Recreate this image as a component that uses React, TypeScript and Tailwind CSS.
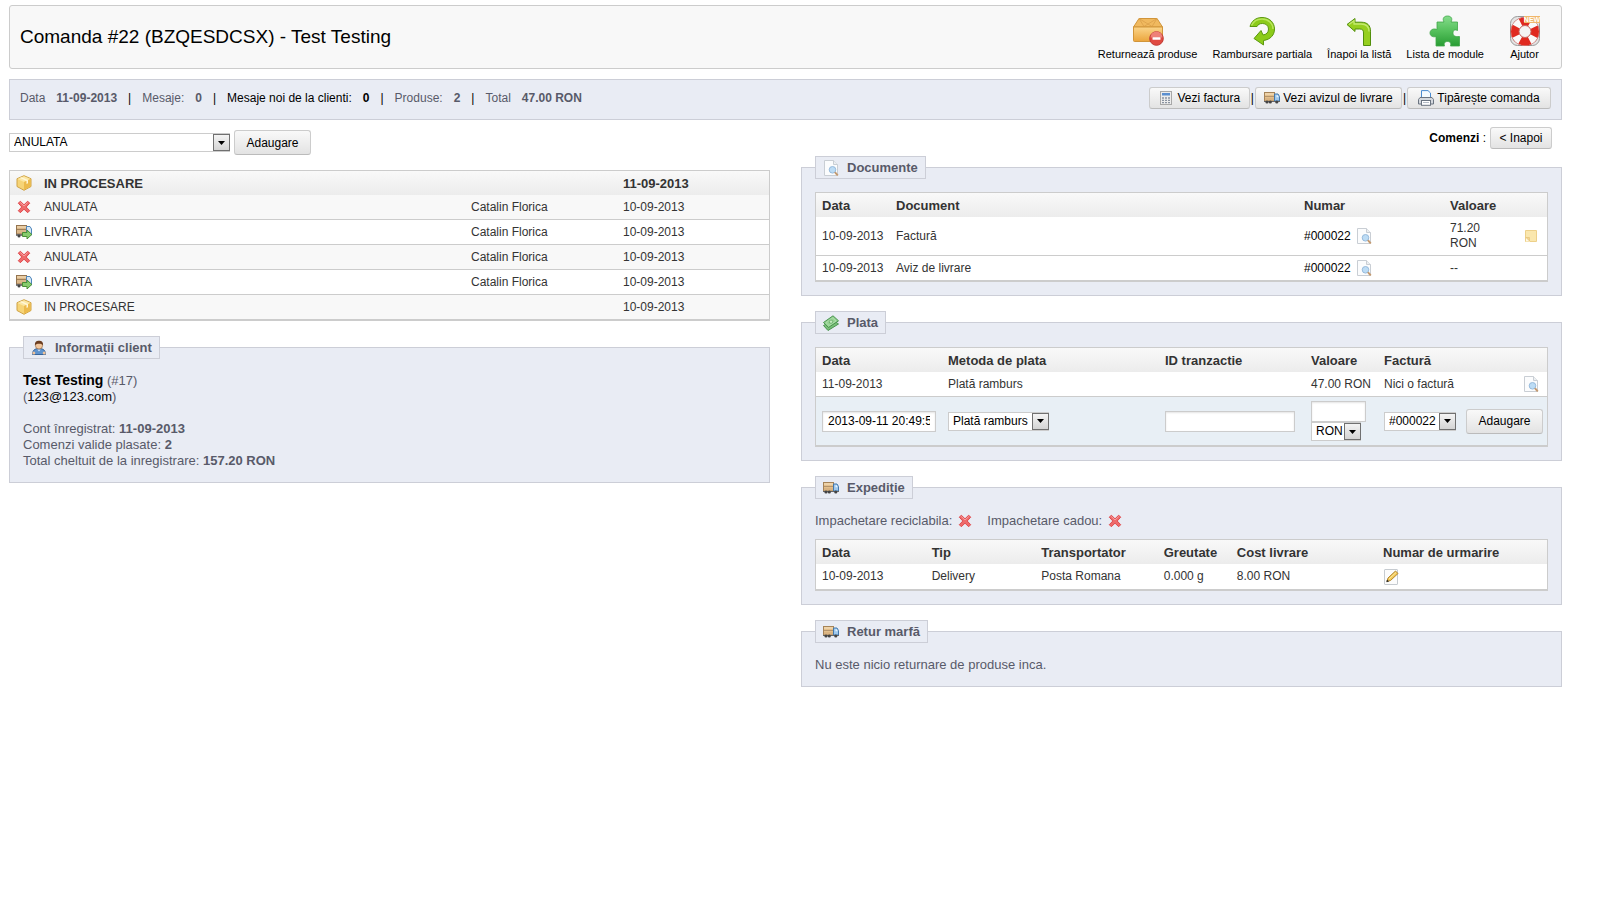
import { ReactNode } from 'react';

type IconProps = { className?: string };

const BoxReturnIcon = () => (
  <svg width="32" height="32" viewBox="0 0 32 32">
    <defs>
      <linearGradient id="carton" x1="0" y1="0" x2="0" y2="1">
        <stop offset="0" stopColor="#fbd58a" />
        <stop offset="1" stopColor="#eba53c" />
      </linearGradient>
    </defs>
    <path d="M7 3.500h18l5.500 8.500h-29z" fill="#f0b95f" stroke="#d1953a" />
    <path d="M7 3.500l5 8L25 3.500M25 3.500l-5 8L7 3.500" stroke="#dba04a" fill="none" strokeWidth="0.800" />
    <path d="M1.500 12h29v13.500q0 1-1 1h-27q-1 0-1-1z" fill="url(#carton)" stroke="#d1953a" />
    <circle cx="24.500" cy="23.500" r="6.800" fill="#e04a42" stroke="#c03a33" />
    <path d="M18.500 22.500a6 6 0 0 1 12 0z" fill="#ee8178" />
    <rect x="20.500" y="22.300" width="8" height="2.500" rx="0.500" fill="#fff" />
  </svg>
);

const RefundIcon = () => (
  <svg width="32" height="32" viewBox="0 0 32 32">
    <path
      d="M4 11.500C5.500 6 10 2.500 16 2.500c7.500 0 12.500 5 12.500 11.500 0 6-4 10.500-11 11.500v4.500L8 23.500l7-8 2 4.500c3.500-.500 5.500-2.500 5.500-6 0-3.300-2.500-5.500-6-5.500-3 0-4.500 1-5.500 3z"
      fill="#8ccb1a"
      stroke="#5b980f"
      strokeLinejoin="round"
    />
    <path d="M5.500 10.500C7.500 6 11.500 4 16 4c6.500 0 11 4.500 11 10" fill="none" stroke="#b9e65c" strokeWidth="1.500" />
  </svg>
);

const BackIcon = () => (
  <svg width="32" height="32" viewBox="0 0 32 32">
    <path
      d="M4 9.500l8-6v3.700h6c6.500 0 9.500 3.300 9.500 9V30.500h-7V18c0-3-1-4-4-4H12v2.500z"
      fill="#96cf1f"
      stroke="#528f0c"
      strokeLinejoin="round"
    />
    <path d="M6 9.500l5-3.800V9h7c5.500 0 8 2.500 8 7.500" fill="none" stroke="#c4ea70" strokeWidth="1.300" />
  </svg>
);

const ModulesIcon = () => (
  <svg width="32" height="32" viewBox="0 0 32 32">
    <defs>
      <linearGradient id="puzzle" x1="0" y1="0" x2="0" y2="1">
        <stop offset="0" stopColor="#86dc8c" />
        <stop offset="0.5" stopColor="#55c05c" />
        <stop offset="1" stopColor="#289c33" />
      </linearGradient>
    </defs>
    <path
      d="M8 7h7c-2-3.500 0-6 3.500-6s5.500 2.500 3.500 6h6.500v8.500c-3-1.500-4.500 0-4.500 2.500s1.500 4 6.500 3.500V31h-9c1-3-.500-4.500-3-4.500s-4 1.500-3 4.500H7v-9.500c-3 1-6-.500-6-3.500s3-5 7-3.500z"
      fill="url(#puzzle)"
      stroke="#3fa648"
      strokeWidth="0.800"
      strokeLinejoin="round"
    />
  </svg>
);

const HelpIcon = () => (
  <svg width="32" height="32" viewBox="0 0 32 32">
    <rect x="1.500" y="1.500" width="29" height="29" rx="7" fill="#e4e4e4" stroke="#9a9a9a" />
    <circle cx="16" cy="16.500" r="10" fill="none" stroke="#b9453e" strokeWidth="9" />
    <circle cx="16" cy="16.500" r="10" fill="none" stroke="#fafafa" strokeWidth="8" />
    <circle
      cx="16"
      cy="16.500"
      r="10"
      fill="none"
      stroke="#e02a20"
      strokeWidth="8"
      strokeDasharray="9.700 6"
      strokeDashoffset="4.850"
    />
    <circle cx="16" cy="16.500" r="6" fill="#f4f4f4" stroke="#c9665f" />
    <rect x="15" y="1" width="16" height="7" fill="#f0b76c" />
    <text x="23" y="7" textAnchor="middle" fontSize="7" fontWeight="bold" fill="#fff">NEW</text>
  </svg>
);

const BoxIcon = () => (
  <svg className="block" width="16" height="16" viewBox="0 0 16 16">
    <path d="M8 .700l7 3v7.800l-7 3.800-7-3.800V3.700z" fill="#f6d477" stroke="#cfa244" strokeLinejoin="round" />
    <path d="M1.500 4L8 7l6.500-3L8 1.200z" fill="#fbe7a5" />
    <path d="M8 7v8l6.500-3.700V4z" fill="#ecba4c" />
    <path d="M4 2.900l6.500 3v3l1.500-.700V5L5.500 2.200z" fill="#fff6d8" />
  </svg>
);

const CrossIcon = ({ className }: IconProps) => (
  <svg className={className} width="16" height="16" viewBox="0 0 16 16">
    <path
      d="M4.300 2.200L8 5.800l3.700-3.600 2 2L10.200 8l3.500 3.700-2 2L8 10.200l-3.700 3.500-2-2L5.800 8 2.300 4.200z"
      fill="#ee6a6a"
      stroke="#e04a4e"
      strokeLinejoin="round"
    />
    <path d="M4.300 3.500L8 7l3.700-3.500" fill="none" stroke="#f7a3a3" />
  </svg>
);

const TruckIcon = ({ className }: IconProps) => (
  <svg className={className} width="16" height="16" viewBox="0 0 16 16">
    <rect x="0.500" y="2.500" width="10" height="8.500" fill="#e3bf8c" stroke="#a58358" />
    <path d="M1 4h9" stroke="#f8e6c6" />
    <path d="M1 6.500h9" stroke="#b4946c" />
    <path d="M1 9h9" stroke="#d0a878" />
    <path d="M10.500 4h3.500l1.500 2.500V11h-5z" fill="#9fc8ec" stroke="#4378ad" />
    <path d="M12.500 5.300h1.200l.8 2h-2z" fill="#e6f3fd" />
    <path d="M0 11.500h16" stroke="#666" />
    <circle cx="3" cy="12" r="1.600" fill="#444" />
    <circle cx="6.300" cy="12" r="1.600" fill="#444" />
    <circle cx="12.800" cy="12" r="1.600" fill="#444" />
  </svg>
);

const DeliveredIcon = () => (
  <svg className="block" width="16" height="16" viewBox="0 0 16 16">
    <rect x="0.500" y="1.500" width="10" height="8.500" fill="#dbb88a" stroke="#947450" />
    <path d="M1 3h9" stroke="#f8e2be" />
    <path d="M1 5.500h9" stroke="#a0805a" />
    <path d="M10.500 2.500h3.500l1.500 2.500v6h-5z" fill="#d5e7f7" stroke="#4f86bb" />
    <path d="M0 11h9" stroke="#555" strokeWidth="1.500" />
    <circle cx="3" cy="12" r="1.500" fill="#444" />
    <path d="M6.500 8.500H11V6l4.800 4.500L11 15v-2.500H6.500z" fill="#86cc6c" stroke="#4a8f36" strokeLinejoin="round" />
  </svg>
);

const UserIcon = () => (
  <svg width="16" height="16" viewBox="0 0 16 16">
    <path d="M1.500 14.500c0-4 2-6 6.500-6s6.500 2 6.500 6z" fill="#5f93cc" stroke="#37649a" />
    <circle cx="2.800" cy="13" r="1.500" fill="#f0c39a" />
    <circle cx="13.200" cy="13" r="1.500" fill="#f0c39a" />
    <path d="M6.500 9.500l1.500 2 1.500-2z" fill="#dfeaf6" />
    <circle cx="8" cy="5.500" r="3.600" fill="#f2c79e" stroke="#8a5a34" strokeWidth="0.600" />
    <path d="M4 5.500C3.500 2 5.500.800 8 .800s4.500 1.200 4 4.700C11 4 9.500 3.800 8 3.800S5 4 4 5.500z" fill="#6b3d20" />
  </svg>
);

const PreviewIcon = ({ className }: IconProps) => (
  <svg className={className} width="16" height="16" viewBox="0 0 16 16">
    <path d="M1.500.500h9l4 4v11h-13z" fill="#fbfcfd" stroke="#c9ced4" />
    <path d="M10.500.500v4h4" fill="#eceff2" stroke="#c9ced4" />
    <circle cx="9.500" cy="9.800" r="3.300" fill="#bcdcf5" stroke="#96badc" />
    <path d="M12.500 12.800l1.800 2" stroke="#c49a70" strokeWidth="2" strokeLinecap="round" />
  </svg>
);

const MoneyIcon = () => (
  <svg width="16" height="16" viewBox="0 0 16 16">
    <path d="M.500 10.500L10 5l5.500 4L5 15.500z" fill="#79bf78" stroke="#4a9450" strokeLinejoin="round" />
    <path d="M.500 7.500L10 .800l5.500 5L5.500 12.500z" fill="#93d190" stroke="#4a9450" strokeLinejoin="round" />
    <path d="M3 7.700L9.700 3l3.300 3-6.800 4.500z" fill="none" stroke="#b5e0b1" strokeWidth="0.800" />
    <circle cx="8" cy="6.700" r="1.700" fill="#c5eac1" stroke="#5aa55c" strokeWidth="0.700" />
  </svg>
);

const NoteIcon = () => (
  <svg className="block" width="16" height="16" viewBox="0 0 16 16">
    <path d="M2.500 2.500h11v11h-11z" fill="#fae7ae" stroke="#edd08a" />
    <path d="M3 9.500h4v4H3z" fill="#fff8e2" />
    <path d="M3 9.500h3.500V13z" fill="#f3d68e" stroke="#e0b868" strokeWidth="0.600" />
  </svg>
);

const EditIcon = () => (
  <svg className="block" width="16" height="16" viewBox="0 0 16 16">
    <rect x="1.500" y="0.500" width="13" height="15" rx="0.500" fill="#fcfcfc" stroke="#c6cbd0" />
    <path d="M4 12.500l1-3.500 7.500-7 2.500 2.500-7.500 7z" fill="#f3c955" stroke="#b18632" strokeLinejoin="round" />
    <path d="M6 10l7-6.500" stroke="#fdeaa6" />
    <path d="M3.700 12.800l.500-1.800 1.300 1.300z" fill="#222" stroke="#222" strokeWidth="0.600" />
  </svg>
);

const CalculatorIcon = () => (
  <svg width="16" height="16" viewBox="0 0 16 16">
    <rect x="2.500" y="1.500" width="11" height="13" fill="#ececec" stroke="#a8a8a8" />
    <rect x="4" y="3" width="8" height="2.500" fill="#5b8fd0" />
    <path d="M4 8h8M4 10.300h8M4 12.600h8" stroke="#8a93a0" strokeWidth="1.300" strokeDasharray="2 1" />
  </svg>
);

const PrinterIcon = () => (
  <svg width="16" height="16" viewBox="0 0 16 16">
    <path d="M3.500 8V.600H10L12.500 3v5z" fill="#f4faff" stroke="#4b8bd0" />
    <path d="M2 7.500h12l1.500 2v4.500H.500V9.500z" fill="#d4d8de" stroke="#6b7480" strokeLinejoin="round" />
    <rect x="3.500" y="10.500" width="9" height="4.800" fill="#fff" stroke="#6b7480" />
    <path d="M5 12.500h6" stroke="#b5bcc6" />
  </svg>
);

const Button = ({ children, className = '' }: { children: ReactNode; className?: string }) => (
  <button
    type="button"
    className={`inline-flex items-center justify-center whitespace-nowrap rounded-[3px] border border-[#ccc] border-b-[#bbb] bg-linear-to-b from-[#f9f9f9] to-[#e3e3e3] text-black ${className}`}
  >
    {children}
  </button>
);

const Select = ({ label, value, className }: { label: string; value: string; className: string }) => (
  <span className={`relative inline-block h-[19px] align-middle text-black ${className}`}>
    <select
      aria-label={label}
      defaultValue={value}
      className="block h-full w-full appearance-none border border-[#ccc] bg-white pl-1 leading-[17px]"
    >
      <option>{value}</option>
    </select>
    <span className="pointer-events-none absolute right-0 top-px flex h-[17px] w-[17px] items-center justify-center border border-[#707070] bg-linear-to-b from-[#f4f4f4] to-[#d4d4d4]">
      <svg width="7" height="4" viewBox="0 0 7 4">
        <path d="M0 0h7L3.500 4z" fill="#000" />
      </svg>
    </span>
  </span>
);

const Input = ({ label, value, className }: { label: string; value?: string; className: string }) => (
  <input
    type="text"
    aria-label={label}
    defaultValue={value}
    className={`block h-[21px] border border-[#ccc] bg-white px-[5px] text-black shadow-[inset_0_1px_2px_#e4e4e4] ${className}`}
  />
);

const Panel = ({ title, icon, children }: { title: string; icon: ReactNode; children: ReactNode }) => (
  <fieldset className="min-w-0 border border-[#ccced7] bg-[#e9ecf4] px-[13px] pb-[13px] pt-[13px] text-[13px]">
    <legend className="flex h-[23px] items-center gap-2 border border-[#ccced7] bg-[#e9ecf4] px-[7px] font-bold">
      {icon}
      {title}
    </legend>
    {children}
  </fieldset>
);

type TableProps = { widths: string[]; head: ReactNode[]; children: ReactNode; className?: string };

const Table = ({ widths, head, children, className = '' }: TableProps) => (
  <table
    className={`w-full table-fixed border-separate border-spacing-0 border border-b-2 border-[#ccc] bg-white text-left text-[12px] leading-[15px] text-[#333] [&_td]:px-[6px] [&_th]:px-[6px] [&_tr:not(:last-child)>td]:border-b [&_tr>td]:border-[#ccc] ${className}`}
  >
    <colgroup>
      {widths.map((width, i) => (
        <col key={i} className={width} />
      ))}
    </colgroup>
    <thead>
      <tr className="h-6 bg-linear-to-b from-[#f9f9f9] to-[#ececec] text-[13px]">
        {head.map((cell, i) => (
          <th key={i} className="whitespace-nowrap">{cell}</th>
        ))}
      </tr>
    </thead>
    <tbody>{children}</tbody>
  </table>
);

const toolbar = [
  { label: 'Returnează produse', icon: <BoxReturnIcon /> },
  { label: 'Rambursare partiala', icon: <RefundIcon /> },
  { label: 'Înapoi la listă', icon: <BackIcon /> },
  { label: 'Lista de module', icon: <ModulesIcon /> },
  { label: 'Ajutor', icon: <HelpIcon /> },
];

const history = [
  { status: 'ANULATA', icon: <CrossIcon className="block" />, employee: 'Catalin Florica' },
  { status: 'LIVRATA', icon: <DeliveredIcon />, employee: 'Catalin Florica' },
  { status: 'ANULATA', icon: <CrossIcon className="block" />, employee: 'Catalin Florica' },
  { status: 'LIVRATA', icon: <DeliveredIcon />, employee: 'Catalin Florica' },
  { status: 'IN PROCESARE', icon: <BoxIcon />, employee: '' },
];

const documents = [
  { name: 'Factură', value: '71.20 RON', note: true, height: 'h-[39px]' },
  { name: 'Aviz de livrare', value: '--', note: false, height: 'h-6' },
];

const Header = () => (
  <header className="flex h-16 items-center justify-between rounded-[3px] border border-[#ccc] bg-[#f8f8f8] pl-[10px] pr-[11px]">
    <h1 className="text-[19px] text-black">Comanda #22 (BZQESDCSX) - Test Testing</h1>
    <nav className="flex gap-[15px] pt-[2px]">
      {toolbar.map(({ label, icon }) => (
        <a
          key={label}
          href="#"
          className="flex min-w-[51px] flex-col items-center whitespace-nowrap text-[11px] leading-[15px] text-black"
        >
          {icon}
          {label}
        </a>
      ))}
    </nav>
  </header>
);

const Separator = () => <span className="text-black">|</span>;

const InfoBar = () => (
  <div className="mt-[10px] flex h-[41px] items-center justify-between border border-[#ccced7] bg-[#e9ecf4] px-[10px] pb-[3px]">
    <div className="flex gap-[11px]">
      <span>Data</span>
      <b>11-09-2013</b>
      <Separator />
      <span>Mesaje:</span>
      <b>0</b>
      <Separator />
      <a href="#" className="flex gap-[11px] text-black">
        <span>Mesaje noi de la clienti:</span>
        <b>0</b>
      </a>
      <Separator />
      <span>Produse:</span>
      <b>2</b>
      <Separator />
      <span>Total</span>
      <b>47.00 RON</b>
    </div>
    <div className="flex items-center gap-px">
      <Button className="h-[22px] w-[101px] gap-[3px]">
        <CalculatorIcon />
        Vezi factura
      </Button>
      <Separator />
      <Button className="h-[22px] w-[147px] gap-[3px]">
        <TruckIcon />
        Vezi avizul de livrare
      </Button>
      <Separator />
      <Button className="h-[22px] w-[144px] gap-[3px]">
        <PrinterIcon />
        Tipărește comanda
      </Button>
    </div>
  </div>
);

const StatusHistory = () => (
  <Table
    widths={['w-[28px]', 'w-auto', 'w-[152px]', 'w-[152px]']}
    head={[<BoxIcon key="icon" />, 'IN PROCESARE', '', '11-09-2013']}
    className="mt-[15px]"
  >
    {history.map(({ status, icon, employee }, i) => (
      <tr key={i} className="h-[25px] last:h-6 odd:bg-[#f8f8f8]">
        <td>{icon}</td>
        <td>{status}</td>
        <td>{employee}</td>
        <td>10-09-2013</td>
      </tr>
    ))}
  </Table>
);

const ClientPanel = () => (
  <Panel title="Informații client" icon={<UserIcon />}>
    <p>
      <a href="#" className="text-[14px] font-bold text-black">Test Testing</a> (#17)
    </p>
    <p>
      (<a href="#" className="text-black">123@123.com</a>)
    </p>
    <p className="mt-4">Cont înregistrat: <b>11-09-2013</b></p>
    <p>Comenzi valide plasate: <b>2</b></p>
    <p>Total cheltuit de la inregistrare: <b>157.20 RON</b></p>
  </Panel>
);

const DocumentsPanel = () => (
  <Panel title="Documente" icon={<PreviewIcon />}>
    <Table
      widths={['w-[74px]', 'w-auto', 'w-[146px]', 'w-[64px]', 'w-[39px]']}
      head={['Data', 'Document', 'Numar', 'Valoare', '']}
    >
      {documents.map(({ name, value, note, height }) => (
        <tr key={name} className={height}>
          <td className="whitespace-nowrap">10-09-2013</td>
          <td>{name}</td>
          <td>
            <a href="#" className="flex items-center gap-[5px] text-black">
              #000022
              <PreviewIcon />
            </a>
          </td>
          <td>{value}</td>
          <td className="pl-[15px]!">{note && <NoteIcon />}</td>
        </tr>
      ))}
    </Table>
  </Panel>
);

const PaymentPanel = () => (
  <Panel title="Plata" icon={<MoneyIcon />}>
    <Table
      widths={['w-[126px]', 'w-auto', 'w-[146px]', 'w-[73px]', 'w-[82px]', 'w-[87px]']}
      head={['Data', 'Metoda de plata', 'ID tranzactie', 'Valoare', 'Factură', '']}
    >
      <tr className="h-[25px]">
        <td>11-09-2013</td>
        <td>Plată ramburs</td>
        <td />
        <td className="whitespace-nowrap">47.00 RON</td>
        <td className="whitespace-nowrap">Nici o factură</td>
        <td>
          <PreviewIcon className="ml-auto mr-0.5 block" />
        </td>
      </tr>
      <tr className="h-12 bg-[#e8eff5]">
        <td>
          <Input label="Data" value="2013-09-11 20:49:53" className="w-full" />
        </td>
        <td>
          <Select label="Metoda de plata" value="Plată ramburs" className="w-[101px]" />
        </td>
        <td>
          <Input label="ID tranzactie" className="w-[130px]" />
        </td>
        <td>
          <Input label="Valoare" className="w-[55px]" />
          <Select label="Moneda" value="RON" className="w-[50px]" />
        </td>
        <td>
          <Select label="Factură" value="#000022" className="w-[72px]" />
        </td>
        <td>
          <Button className="h-[25px] w-[77px]">Adaugare</Button>
        </td>
      </tr>
    </Table>
  </Panel>
);

const ShippingPanel = () => (
  <Panel title="Expediție" icon={<TruckIcon />}>
    <div className="mb-[10px] flex items-center gap-[14px] leading-[17px]">
      <span className="flex items-center gap-[5px]">
        Impachetare reciclabila:
        <CrossIcon />
      </span>
      <span className="flex items-center gap-[5px]">
        Impachetare cadou:
        <CrossIcon />
      </span>
    </div>
    <Table
      widths={['w-[15%]', 'w-[15%]', 'w-auto', 'w-[10%]', 'w-[20%]', 'w-[170px]']}
      head={['Data', 'Tip', 'Transportator', 'Greutate', 'Cost livrare', 'Numar de urmarire']}
    >
      <tr className="h-[25px]">
        <td>10-09-2013</td>
        <td>Delivery</td>
        <td>Posta Romana</td>
        <td>0.000 g</td>
        <td>8.00 RON</td>
        <td>
          <a href="#" aria-label="Editează">
            <EditIcon />
          </a>
        </td>
      </tr>
    </Table>
  </Panel>
);

export default function App() {
  return (
    <main className="bg-white pb-8 pl-[9px] pr-[38px] pt-[5px] font-['Liberation_Sans',Arial,sans-serif] text-[12px] leading-4 text-[#585a69]">
      <Header />
      <InfoBar />
      <div className="grid grid-cols-2 gap-x-[31px]">
        <section className="pt-[10px]">
          <form className="flex items-center gap-1">
            <Select label="Status" value="ANULATA" className="w-[221px]" />
            <Button className="h-[25px] w-[77px]">Adaugare</Button>
          </form>
          <StatusHistory />
          <div className="mt-[15px]">
            <ClientPanel />
          </div>
        </section>
        <section className="pt-[7px]">
          <div className="flex items-center justify-end gap-1 pr-[10px] text-black">
            <span>
              <b>Comenzi</b> :
            </span>
            <Button className="h-[22px] w-[62px]">&lt; Inapoi</Button>
          </div>
          <div className="mt-[7px] flex flex-col gap-[15px]">
            <DocumentsPanel />
            <PaymentPanel />
            <ShippingPanel />
            <Panel title="Retur marfă" icon={<TruckIcon />}>
              <p className="leading-[17px]">Nu este nicio returnare de produse inca.</p>
            </Panel>
          </div>
        </section>
      </div>
    </main>
  );
}
